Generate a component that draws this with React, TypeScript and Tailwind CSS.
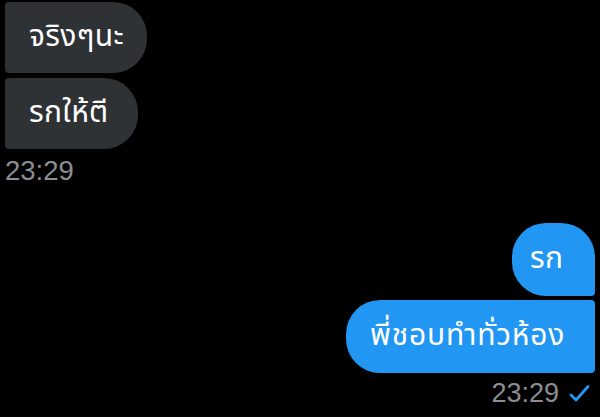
import React from "react";

const thai = { fontFamily: '"Noto Sans Thai", "Noto Sans Thai Looped", "Noto Sans", "DejaVu Sans", sans-serif' };

function Check() {
  return (
    <svg width="21" height="17" viewBox="0 0 21 17" fill="none">
      <path d="M2 10 L7 15 L19 1.5" stroke="#2196f3" strokeWidth="2.8" strokeLinecap="round" strokeLinejoin="round" />
    </svg>
  );
}

export default function App() {
  return (
    <div className="h-[417px] w-[600px] overflow-hidden bg-black font-['Liberation_Sans',sans-serif]">
      <div className="flex flex-col items-start gap-[5px] pl-[5px] pt-[2px]">
        <div
          style={thai}
          className="flex h-[71px] w-[142px] items-center rounded-l-[4px] rounded-r-[34px] bg-[#2f3235] pl-6 text-[30px] tracking-[0.3px] text-white"
        >
          จริงๆนะ
        </div>
        <div
          style={thai}
          className="flex h-[71px] w-[133px] items-center rounded-l-[4px] rounded-r-[34px] bg-[#2f3235] pl-6 text-[30px] tracking-[0.3px] text-white"
        >
          รกให้ตี
        </div>
      </div>
      <div className="pl-[5px] pt-[7px] text-[27.5px] leading-[30px] text-[#8b8e92]">23:29</div>

      <div className="mt-[37px] flex flex-col items-end gap-[4px] pr-[5px]">
        <div
          style={thai}
          className="flex h-[73px] w-[83px] items-center rounded-[34px] rounded-br-[4px] bg-[#2196f3] pl-[18px] text-[30px] tracking-[0.3px] text-white"
        >
          รก
        </div>
        <div
          style={thai}
          className="flex h-[73px] w-[249px] items-center rounded-l-[34px] rounded-r-[4px] bg-[#2196f3] pl-6 text-[30px] tracking-[0.8px] text-white"
        >
          พี่ชอบทำทั่วห้อง
        </div>
        <div className="flex items-center gap-[10px] pr-[5px] pt-[1px]">
          <span className="text-[27px] leading-[30px] text-[#8b8e92]">23:29</span>
          <Check />
        </div>
      </div>
    </div>
  );
}
